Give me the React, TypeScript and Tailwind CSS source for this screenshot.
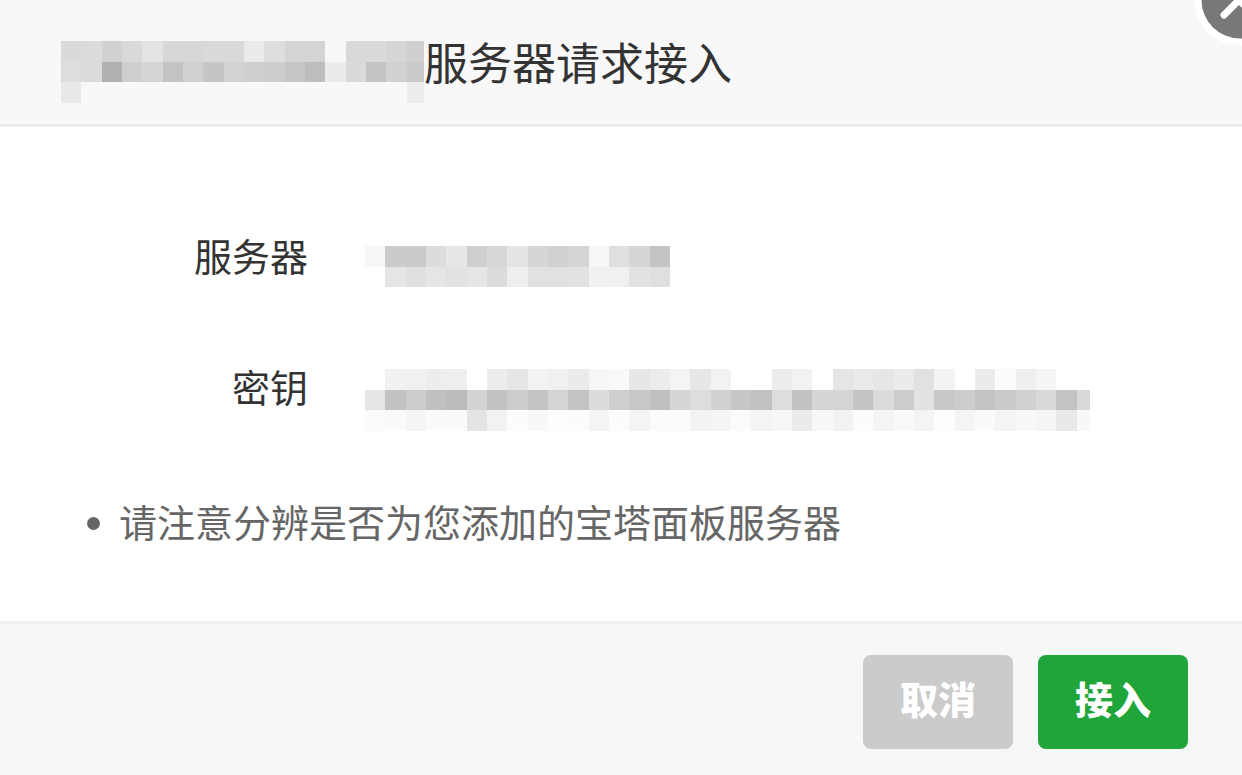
interface MosaicProps {
	label: string;
	width: number;
	height: number;
	rows: string[];
}

const CELL_W = 20.33;
const CELL_H = 20.5;

// Each row is a list of two-digit gray levels; "--" leaves the cell empty.
const TITLE_ROWS = [
	'da db d1 d9 e3 d7 d7 d9 d9 ea de d4 d4 f7 d9 da d6 cf',
	'dd db b0 ce d5 c3 d1 c5 d2 ce cd c6 bd eb da c4 d1 ca',
	'e9 -- -- -- -- -- -- -- -- -- -- -- -- -- -- -- -- ed',
];

const SERVER_ROWS = [
	'f7 cb cb dc e7 cf d7 e4 d6 d1 d5 f7 df d6 c4',
	'-- e5 e0 e5 e2 e5 dc ee e1 e1 e2 f1 f0 e2 df',
];

const KEY_ROWS = [
	'-- f1 f0 ed ef -- ed e6 f3 f0 eb f7 f9 e7 ec f4 e7 f2 -- -- ec f2 -- e5 ea e6 eb e1 f3 -- eb fb ef f5 -- --',
	'e5 c2 cc c0 bb d3 c2 cc c3 d4 c3 dc ce c8 c0 d6 dd d1 c6 c1 dd c2 d6 d4 c4 db cc e2 c8 cd c4 ca d1 d9 c3 d9',
	'fb fa f5 fa fa e4 f2 fc f8 fd fc f4 fc f4 fb fb f3 f5 fb f4 f7 eb f8 f2 fc f4 f9 f4 fd f4 fa f4 f8 f5 e9 f8',
];

function Mosaic({ label, width, height, rows }: MosaicProps) {
	return (
		<svg
			role="img"
			aria-label={label}
			width={width}
			height={height}
			viewBox={`0 0 ${width} ${height}`}
			shapeRendering="crispEdges"
			className="block shrink-0"
		>
			{rows.map((row, y) =>
				row.split(' ').map((level, x) =>
					level === '--' ? null : (
						<rect
							key={`${x}-${y}`}
							x={x * CELL_W}
							y={y * CELL_H}
							width={CELL_W}
							height={CELL_H}
							fill={`#${level}${level}${level}`}
						/>
					),
				),
			)}
		</svg>
	);
}

function CloseIcon() {
	return (
		<svg viewBox="0 0 90 90" className="block h-[90px] w-[90px]" aria-hidden="true">
			<circle cx="45" cy="45" r="45" fill="#fff" />
			<circle cx="46" cy="45" r="38.5" fill="#787878" />
			<path
				d="M30 30 L60 60 M60 30 L30 60"
				stroke="#fff"
				strokeWidth="7"
				strokeLinecap="round"
			/>
		</svg>
	);
}

export default function App() {
	return (
		<div
			role="dialog"
			aria-labelledby="dialog-title"
			className="relative overflow-hidden bg-white font-['Noto_Sans_CJK_SC',sans-serif] text-[38px] leading-[54px] text-[#333]"
		>
			<header className="flex items-start border-b-[3px] border-[#ececec] bg-[#f8f8f8] pb-[21px] pl-[61px] pt-[41px]">
				<Mosaic label="名称" width={363} height={62} rows={TITLE_ROWS} />
				<h1 id="dialog-title" className="-mt-2 text-[44px] leading-[56px]">
					服务器请求接入
				</h1>
			</header>
			<button
				type="button"
				aria-label="关闭"
				className="absolute -right-[42px] -top-[45px] rounded-full"
			>
				<CloseIcon />
			</button>

			<main className="pb-[69px] pt-[101px]">
				<dl className="flex flex-col gap-[71px]">
					<div className="flex h-[60px] gap-[57px]">
						<dt className="w-[308px] shrink-0 text-right">服务器</dt>
						<dd className="pt-[18px]">
							<Mosaic label="服务器" width={305} height={41} rows={SERVER_ROWS} />
						</dd>
					</div>
					<div className="flex h-[60px] gap-[57px]">
						<dt className="w-[308px] shrink-0 text-right">密钥</dt>
						<dd className="pt-[10px]">
							<Mosaic label="密钥" width={725} height={62} rows={KEY_ROWS} />
						</dd>
					</div>
				</dl>
				<ul className="mt-[75px] pl-[87px] text-[#666]">
					<li className="flex items-center gap-[19px]">
						<span className="h-[13px] w-[13px] shrink-0 rounded-full bg-[#666]" />
						<span className="pb-1">请注意分辨是否为您添加的宝塔面板服务器</span>
					</li>
				</ul>
			</main>

			<footer className="flex justify-end gap-[25px] border-t-[3px] border-[#edf1f0] bg-[#f5f8f7] pb-[26px] pr-[54px] pt-[31px] font-black text-white">
				<button type="button" className="h-[94px] w-[150px] rounded-lg bg-[#cbcbcb] pb-2">
					取消
				</button>
				<button type="button" className="h-[94px] w-[150px] rounded-lg bg-[#20a53a] pb-2">
					接入
				</button>
			</footer>
		</div>
	);
}
